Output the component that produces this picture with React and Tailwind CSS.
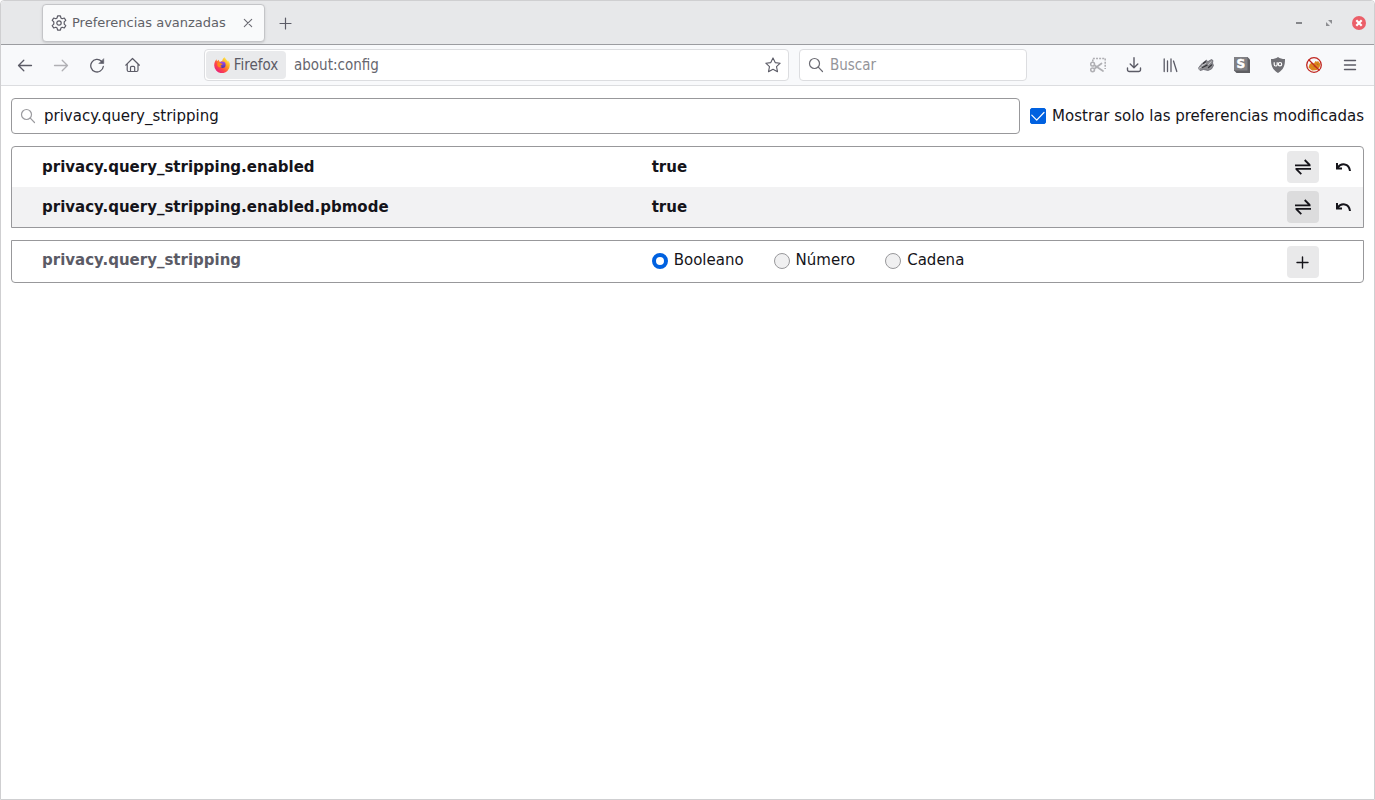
import { useState } from "react";

const initialPrefs = [
    { name: "privacy.query_stripping.enabled", value: true },
    { name: "privacy.query_stripping.enabled.pbmode", value: true },
];

const types = ["Booleano", "Número", "Cadena"];

function Icon({ children, className = "", size = 16 }) {
    return (
        <svg
            width={size}
            height={size}
            viewBox="0 0 16 16"
            fill="none"
            stroke="currentColor"
            strokeWidth="1.2"
            strokeLinecap="round"
            strokeLinejoin="round"
            className={className}
            aria-hidden="true"
        >
            {children}
        </svg>
    );
}

function SearchIcon({ className }) {
    return (
        <Icon className={className}>
            <circle cx="6.5" cy="6.5" r="5" />
            <path d="M10.3 10.2 14.500 14.500" />
        </Icon>
    );
}

function GearIcon() {
    return (
        <Icon>
            <circle cx="8" cy="8" r="2.2" />
            <path d="M6.6.8h2.8l.5 2.1 1.3.8 2.1-.7 1.5 2.4-1.6 1.5v2.2l1.6 1.5-1.5 2.4-2.1-.7-1.3.8-.5 2.1H6.6l-.5-2.100-1.300-.8-2.100.7-1.500-2.400 1.600-1.500V6.900L1.200 5.400 2.700 3l2.100.7 1.300-.8z" />
        </Icon>
    );
}

function FirefoxLogo() {
    return (
        <svg width="16" height="16" viewBox="0 0 16 16" aria-hidden="true">
            <defs>
                <linearGradient id="fox" x1="0.85" y1="0.1" x2="0.15" y2="0.9">
                    <stop offset="0" stopColor="#fff14f" />
                    <stop offset="0.35" stopColor="#ffa21f" />
                    <stop offset="0.65" stopColor="#ff4a46" />
                    <stop offset="1" stopColor="#e8207a" />
                </linearGradient>
                <linearGradient id="globe" x1="0.5" y1="0" x2="0.5" y2="1">
                    <stop offset="0" stopColor="#a64bf0" />
                    <stop offset="1" stopColor="#4a35a8" />
                </linearGradient>
            </defs>
            <path
                fill="url(#fox)"
                d="M15.4 5.6c-.4-.9-1.1-1.8-1.7-2.1.5.9.7 1.8.8 2.2-.9-2.2-2.4-3-3.6-5-.3-.4-.2-.6-.2-.7C9 1 8.3 3 8.2 4.1c-.8.1-1.5.3-2.1.8C5 4.4 4.9 3.1 4.9 2.7c-.7.3-1.4.9-1.9 1.5-.4-.5-.3-1.7-.3-2C1.4 3.2.3 5.5.2 8.2a7.8 7.8 0 0 0 15.600.3c.1-1 0-2-.4-2.900z"
            />
            <circle cx="8.4" cy="7.8" r="3.2" fill="url(#globe)" />
            <path fill="#ff8a16" d="M3.6 5.6c1.5-.5 2.9 0 3.4.8.7.1 1.7.1 1.7.5 0 .5-1.7 1-2.1 1.7-.2.5.3 1.4 1.7 1.5-1.6.9-4.3.5-4.9-1.5-.3-1.1-.2-2.200.2-3z" />
        </svg>
    );
}

function ToolbarButton({ label, disabled, children }) {
    return (
        <button
            type="button"
            aria-label={label}
            title={label}
            disabled={disabled}
            className="flex h-8 w-9 shrink-0 items-center justify-center text-[#5b5b66] disabled:text-[#b0b0b4]"
        >
            {children}
        </button>
    );
}

function TitleBar() {
    return (
        <div className="flex h-11 items-center rounded-t border-b border-[#9b9ca0] bg-[#e7e8ea] pl-[41px]">
            <div className="flex h-[38px] w-[223px] items-center rounded border border-[#c4c5c8] bg-[#f9fafb] pl-2 shadow-sm">
                <span className="text-[#5b5b66]">
                    <GearIcon />
                </span>
                <span className="ml-[5px] flex-1 whitespace-nowrap text-[13px] text-[#606167]">Preferencias avanzadas</span>
                <button type="button" aria-label="Cerrar pestaña" className="flex h-8 w-8 items-center justify-center text-[#6b6b73]">
                    <Icon>
                        <path strokeWidth="1.1" d="m4.3 4.3 7.4 7.4M11.7 4.3l-7.4 7.4" />
                    </Icon>
                </button>
            </div>
            <button type="button" aria-label="Nueva pestaña" className="flex h-9 w-10 items-center justify-center text-[#5b5b66]">
                <Icon>
                    <path d="M8.5 3v11M3 8.500h11" />
                </Icon>
            </button>
            <div className="ml-auto flex">
                <button type="button" aria-label="Minimizar" className="flex h-8 w-[30px] items-center justify-center text-[#85868a]">
                    <Icon>
                        <path strokeWidth="2" strokeLinecap="butt" d="M5 8h6" />
                    </Icon>
                </button>
                <button type="button" aria-label="Maximizar" className="flex h-8 w-[30px] items-center justify-center text-[#8d8e92]">
                    <Icon>
                        <path fill="currentColor" stroke="none" d="M7 5h4v4zM5 7v4h4z" />
                    </Icon>
                </button>
                <button type="button" aria-label="Cerrar ventana" className="flex h-8 w-[30px] items-center justify-center">
                    <Icon>
                        <circle cx="8" cy="8" r="7" fill="#eb5f69" stroke="none" />
                        <path stroke="#fff" strokeWidth="2.2" strokeLinecap="butt" d="m5.3 5.3 5.4 5.4M10.7 5.3l-5.4 5.4" />
                    </Icon>
                </button>
            </div>
        </div>
    );
}

function Extensions() {
    return (
        <>
            <ToolbarButton label="Captura de pantalla" disabled>
                <Icon>
                    <path strokeWidth="1.6" strokeLinecap="butt" strokeDasharray="2 1.1" d="M2.800 4.500V1.500h12.400V12" />
                    <circle cx="2.6" cy="7.2" r="1.9" strokeWidth="1.5" />
                    <circle cx="2.6" cy="12.8" r="1.9" strokeWidth="1.5" />
                    <path strokeWidth="1.7" d="m4.4 8.2 8.600 5.800M4.400 11.800 11.500 6.500" />
                </Icon>
            </ToolbarButton>
            <ToolbarButton label="Descargas">
                <Icon>
                    <path strokeWidth="1.4" d="M8 .8v9.7M4.2 7 8 10.8 11.8 7M1.5 11v1.7a1.8 1.8 0 0 0 1.8 1.8h9.4a1.8 1.8 0 0 0 1.8-1.8V11" />
                </Icon>
            </ToolbarButton>
            <ToolbarButton label="Biblioteca">
                <Icon>
                    <path strokeWidth="1.3" d="M2.200 2v12.500M5.500 4v10.500M9 2v12.500M11.500 4l3.300 10.500" />
                </Icon>
            </ToolbarButton>
            <ToolbarButton label="Privacy Badger">
                <Icon>
                    <path fill="#8c8c90" strokeWidth=".7" d="M.5 11 3 7.5l3.500-3L8.500 3l1 1.800L13.500 2.500l1.500 1L14.500 6l1 2.500-2 3.500-3.500 1.500-4.500-1-3 1z" />
                    <path stroke="#d0d0d4" strokeWidth=".9" d="m4 8.800 3.500-2.300M10.500 7.500l2.500-2.700M1.500 11l1.500-.8" />
                    <path stroke="#36363b" strokeWidth="1.3" d="m4.500 10.500 4.500-2.300M10.500 10.500 13.500 8M5.500 6.300l2-1.500" />
                </Icon>
            </ToolbarButton>
            <ToolbarButton label="Stylus">
                <svg width="16" height="16" viewBox="0 0 16 16" aria-hidden="true">
                    <path fill="#5e5e62" d="M0 0h13.5L16 2.5V16H2.5L0 13.5z" />
                    <path fill="#808084" d="M0 0h13.5v13.5H0z" />
                    <text x="6.75" y="11" textAnchor="middle" fontFamily="DejaVu Sans" fontWeight="bold" fontSize="12" fill="#fff" stroke="#fff" strokeWidth=".5">
                        S
                    </text>
                </svg>
            </ToolbarButton>
            <ToolbarButton label="uBlock Origin">
                <svg width="16" height="16" viewBox="0 0 16 16" aria-hidden="true">
                    <path fill="#707075" d="M8 0c2 1.5 4 2 7 2 0 7-1.5 10.5-7 14C2.5 12.5 1 9 1 2c3 0 5-.5 7-2z" />
                    <path fill="none" stroke="#fff" strokeWidth="1.2" d="M4.2 5.200v2.300a1.500 1.500 0 0 0 3 0V5.200" />
                    <circle cx="10" cy="7.2" r="1.7" fill="none" stroke="#fff" strokeWidth="1.2" />
                </svg>
            </ToolbarButton>
            <ToolbarButton label="Cookie AutoDelete">
                <Icon>
                    <path fill="#dc861d" stroke="none" d="m2.500 10.500 1-3 2-2 2.500 1L9.500 4l1.500.8L12 4l2.500 3-1 3.500L11 13l-5 .5z" />
                    <path stroke="#a85f12" strokeWidth=".8" d="m8 9.500 1.500.5M11 7l1 .5" />
                    <circle cx="8" cy="8" r="7.300" stroke="#c02620" strokeWidth="1.3" />
                    <path stroke="#c02620" strokeWidth="1.3" d="m3 3 10 10" />
                </Icon>
            </ToolbarButton>
            <ToolbarButton label="Menú">
                <Icon>
                    <path strokeWidth="1.4" d="M2.500 3.500h11M2.500 8h11M2.500 12.500h11" />
                </Icon>
            </ToolbarButton>
        </>
    );
}

function NavBar() {
    return (
        <nav className="flex h-[41px] items-center border-b border-[#dcdde0] bg-[#f8f9fb] px-1.5 font-['DejaVu_Sans_Condensed','DejaVu_Sans',sans-serif]">
            <ToolbarButton label="Atrás">
                <Icon>
                    <path strokeWidth="1.3" d="M14.5 8.5h-13M6.8 3.2 1.5 8.5l5.300 5.300" />
                </Icon>
            </ToolbarButton>
            <ToolbarButton label="Adelante" disabled>
                <Icon>
                    <path strokeWidth="1.3" d="M1.5 8.5h13M9.2 3.2l5.300 5.300-5.300 5.300" />
                </Icon>
            </ToolbarButton>
            <ToolbarButton label="Recargar">
                <Icon>
                    <path strokeWidth="1.3" d="M14.3 9.5A6.3 6.3 0 1 1 12.5 4.2" />
                    <path fill="currentColor" strokeWidth=".6" d="M14.7 2v4.5h-4.5z" />
                </Icon>
            </ToolbarButton>
            <ToolbarButton label="Inicio">
                <Icon>
                    <path strokeWidth="1.2" d="M.8 8.2 7.5 1.5l6.9 6.7M2.2 7v6a1.5 1.5 0 0 0 1.5 1.5h7.8A1.5 1.5 0 0 0 13 13V7M5.5 14.5v-4A1.2 1.2 0 0 1 6.7 9.3h1.8a1.200 1.200 0 0 1 1.200 1.200v4" />
                </Icon>
            </ToolbarButton>
            <div className="ml-[53px] flex h-8 min-w-0 flex-1 items-center rounded border border-[#dcdde0] bg-white pl-px">
                <button type="button" className="flex h-7 w-20 items-center justify-center gap-1 rounded-sm bg-[#e9eaec] text-[#5b5b66]">
                    <FirefoxLogo />
                    Firefox
                </button>
                <input
                    type="text"
                    aria-label="Dirección"
                    defaultValue="about:config"
                    className="ml-2 min-w-0 flex-1 text-[#66666e] outline-none"
                />
                <button type="button" aria-label="Añadir a marcadores" className="flex h-7 w-[30px] items-center justify-center text-[#5b5b66]">
                    <Icon>
                        <path strokeWidth="1.1" d="m8 .9 2.200 4.700 5 .6-3.700 3.500 1 5L8 12.200l-4.500 2.500 1-5L.8 6.200l5-.6z" />
                    </Icon>
                </button>
            </div>
            <div className="ml-2.5 mr-[53px] flex h-8 w-57 items-center gap-1.5 rounded border border-[#dcdde0] bg-white pl-2">
                <SearchIcon className="shrink-0 text-[#6b6b73]" />
                <input
                    type="text"
                    aria-label="Buscar en la web"
                    placeholder="Buscar"
                    className="min-w-0 flex-1 outline-none placeholder:text-[#949499]"
                />
            </div>
            <Extensions />
        </nav>
    );
}

function Columns() {
    return (
        <colgroup>
            <col className="w-[47.35%]" />
            <col />
            <col className="w-10" />
            <col className="w-10" />
        </colgroup>
    );
}

export default function App() {
    const [query, setQuery] = useState("privacy.query_stripping");
    const [onlyModified, setOnlyModified] = useState(true);
    const [prefs, setPrefs] = useState(initialPrefs);
    const [type, setType] = useState("Booleano");

    const handleToggle = (name) => {
        setPrefs((prev) => prev.map((pref) => (pref.name === name ? { ...pref, value: !pref.value } : pref)));
    };

    return (
        <div className="flex min-h-screen flex-col rounded-t border border-[#cfcfd1] bg-white font-['DejaVu_Sans',sans-serif] text-[15px] text-[#15141a]">
            <TitleBar />
            <NavBar />

            <main className="flex flex-col gap-3 px-2.5 py-3">
                <div className="flex items-center gap-2.5">
                    <div className="flex h-9 min-w-0 flex-1 items-center gap-2 rounded border border-[#98989b] pl-2">
                        <SearchIcon className="shrink-0 text-[#9b9b9f]" />
                        <input
                            type="text"
                            aria-label="Buscar nombre de preferencia"
                            value={query}
                            onChange={(e) => setQuery(e.target.value)}
                            className="min-w-0 flex-1 outline-none"
                        />
                    </div>
                    <label className="flex items-center gap-1.5">
                        <span className="grid h-4 w-4">
                            <input
                                type="checkbox"
                                checked={onlyModified}
                                onChange={(e) => setOnlyModified(e.target.checked)}
                                className="col-start-1 row-start-1 h-4 w-4 appearance-none rounded-xs border border-[#98989b] checked:border-[#0061e0] checked:bg-[#0061e0]"
                            />
                            {onlyModified && (
                                <Icon className="pointer-events-none col-start-1 row-start-1 text-white">
                                    <path strokeWidth="1.2" d="m1.8 7.2 4.9 5L14 4.5" />
                                </Icon>
                            )}
                        </span>
                        Mostrar solo las preferencias modificadas
                    </label>
                </div>

                {/* Preferences that match the search */}
                <div className="rounded-t border border-[#98989b]">
                    <table className="w-full table-fixed">
                        <Columns />
                        <tbody>
                            {prefs.map((pref) => (
                                <tr key={pref.name} className="group h-10 even:bg-[#f2f2f3]">
                                    <th scope="row" className="pl-[30px] text-left font-bold">
                                        {pref.name}
                                    </th>
                                    <td className="font-bold">{String(pref.value)}</td>
                                    <td>
                                        <button
                                            type="button"
                                            aria-label="Alternar"
                                            onClick={() => handleToggle(pref.name)}
                                            className="mx-auto flex h-8 w-8 items-center justify-center rounded-sm bg-[#e9e9ea] group-even:bg-[#dcdcdd]"
                                        >
                                            <Icon>
                                                <path strokeWidth="1.8" strokeLinecap="butt" strokeLinejoin="miter" d="M0 6.3h15.500M.5 9.900H16M9.700 1l5 5M6.300 15.200l-5-5" />
                                            </Icon>
                                        </button>
                                    </td>
                                    <td>
                                        <button type="button" aria-label="Restablecer" className="mx-auto flex h-8 w-8 items-center justify-center">
                                            <Icon>
                                                <path strokeWidth="2" strokeLinecap="butt" d="M2.500 9C6 3.500 14 4 15 12" />
                                                <path strokeWidth="2" strokeLinecap="butt" strokeLinejoin="miter" d="M2 4v5.500h5" />
                                            </Icon>
                                        </button>
                                    </td>
                                </tr>
                            ))}
                        </tbody>
                    </table>
                </div>

                {/* New preference with the searched name */}
                <form onSubmit={(e) => e.preventDefault()} className="rounded-b border border-[#98989b]">
                    <table className="w-full table-fixed">
                        <Columns />
                        <tbody>
                            <tr className="h-[41px]">
                                <th scope="row" className="pb-0.5 pl-[30px] text-left font-bold text-[#5b5b66]">
                                    {query}
                                </th>
                                <td className="pb-0.5">
                                    <div className="flex gap-[30px]">
                                        {types.map((item) => (
                                            <label key={item} className="flex items-center gap-1.5">
                                                <input
                                                    type="radio"
                                                    name="type"
                                                    value={item}
                                                    checked={type === item}
                                                    onChange={() => setType(item)}
                                                    className="h-4 w-4 appearance-none rounded-full border border-[#98989b] bg-[#f0f0f1] checked:border-4 checked:border-[#0061e0] checked:bg-white"
                                                />
                                                {item}
                                            </label>
                                        ))}
                                    </div>
                                </td>
                                <td>
                                    <button type="submit" aria-label="Añadir" className="mx-auto flex h-8 w-8 items-center justify-center rounded-sm bg-[#e9e9ea]">
                                        <Icon>
                                            <path strokeWidth="1.4" d="M7.5 3v11M2 8.5h11" />
                                        </Icon>
                                    </button>
                                </td>
                                <td></td>
                            </tr>
                        </tbody>
                    </table>
                </form>
            </main>
        </div>
    );
}
